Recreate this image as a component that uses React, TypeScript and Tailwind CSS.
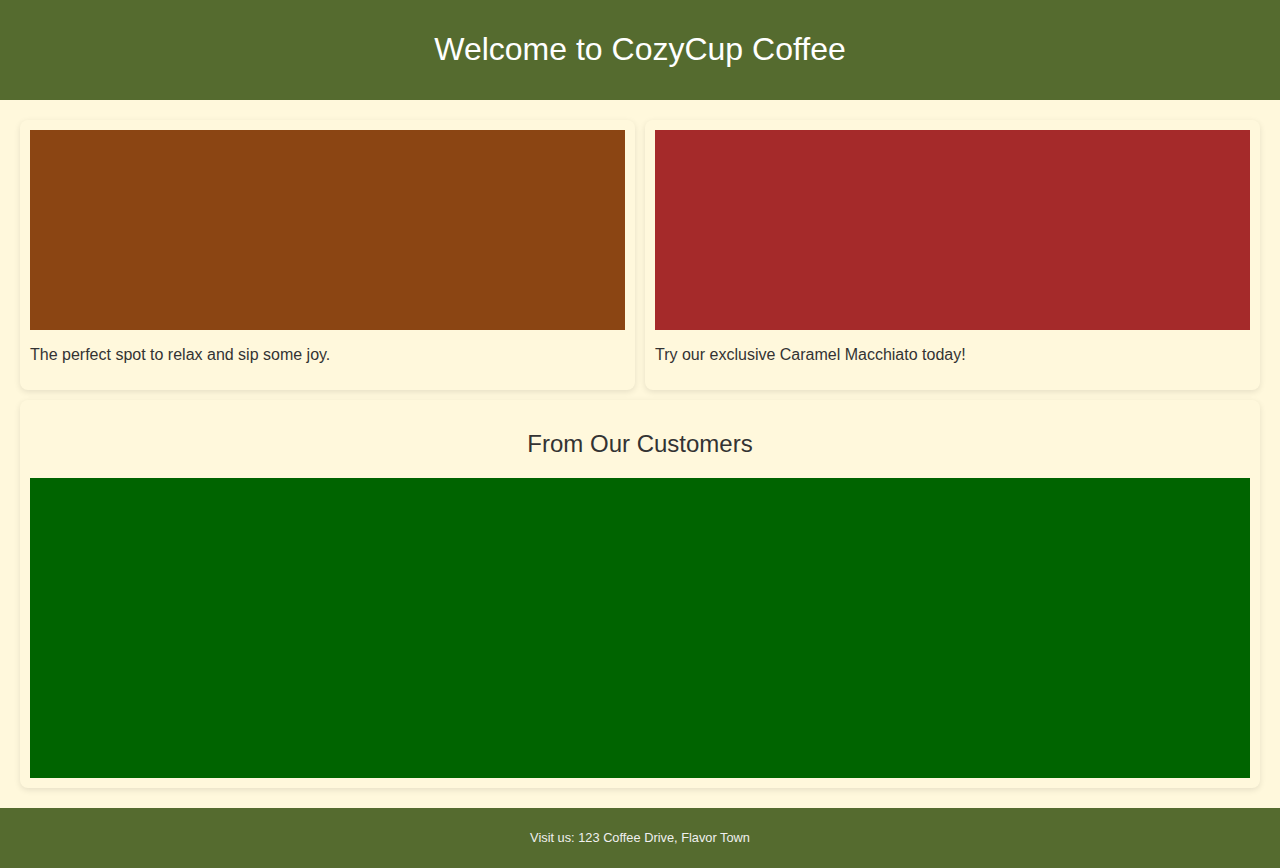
import React from "react";

const cards = [
  { color: "bg-[#8B4513]", text: "The perfect spot to relax and sip some joy." },
  { color: "bg-[#A52A2A]", text: "Try our exclusive Caramel Macchiato today!" },
];

export default function App() {
  return (
    <div className="min-h-screen bg-[#FFF8DC] text-[#333] font-['Liberation_Sans',Arial,sans-serif]">
      <header className="h-[100px] pb-0.5 bg-[#556B2F] flex items-center justify-center">
        <h1 className="text-[32px] leading-[1.15] text-white">Welcome to CozyCup Coffee</h1>
      </header>

      <main className="p-5 flex flex-col gap-2.5">
        <div className="grid grid-cols-2 gap-2.5">
          {cards.map((c) => (
            <div key={c.text} className="rounded-lg p-2.5 shadow-[0_2px_6px_rgba(0,0,0,0.1)]">
              <div className={`h-[200px] ${c.color}`} />
              <p className="my-4 text-base leading-[1.15]">{c.text}</p>
            </div>
          ))}
        </div>

        <div className="rounded-lg p-2.5 shadow-[0_2px_6px_rgba(0,0,0,0.1)]">
          <h2 className="my-[19.92px] text-2xl leading-[1.15] text-center">From Our Customers</h2>
          <div className="h-[300px] bg-[#006400]" />
        </div>
      </main>

      <footer className="h-[60px] bg-[#556B2F] flex items-center justify-center">
        <p className="text-[12.8px] text-[#f0f0f0]">Visit us: 123 Coffee Drive, Flavor Town</p>
      </footer>
    </div>
  );
}
